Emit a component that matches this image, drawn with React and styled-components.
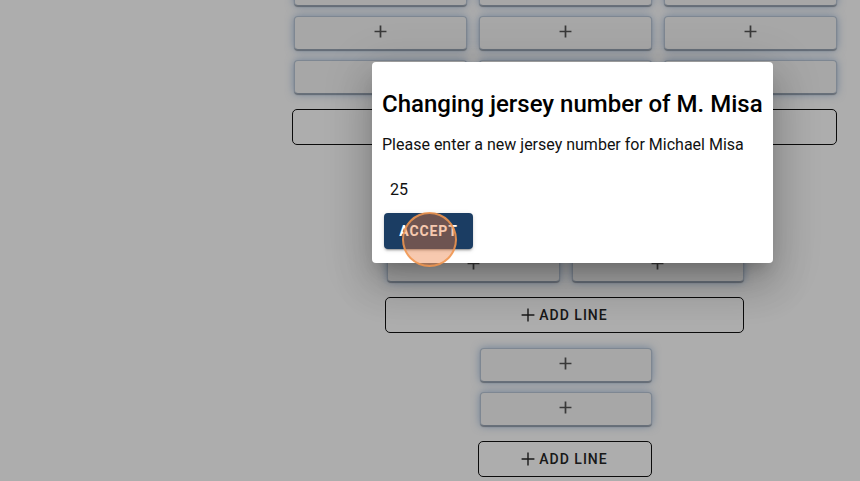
import React from 'react';
import styled, { createGlobalStyle } from 'styled-components';

const Global = createGlobalStyle`
  html, body {
    margin: 0;
    padding: 0;
    background: #fff;
    font-family: Roboto, "Noto Sans", "Liberation Sans", sans-serif;
    overflow: hidden;
  }
  * { box-sizing: border-box; }
`;

const Page = styled.div`
  position: relative;
  width: 860px;
  height: 481px;
  overflow: hidden;
  background: #fff;
`;

const Main = styled.main`
  margin-left: 292px;
  margin-top: -28px;
  width: 545px;
  display: flex;
  flex-direction: column;
  align-items: center;
  gap: 15px;
`;

const Grid = styled.div`
  width: ${(p) => p.$width}px;
  padding-left: 2px;
  display: grid;
  grid-template-columns: repeat(${(p) => p.$cols}, 1fr);
  column-gap: 12px;
  row-gap: 10px;
`;

const Slot = styled.button`
  height: 34px;
  padding: 0 0 3px;
  display: flex;
  align-items: ${(p) => (p.$player ? 'flex-end' : 'center')};
  justify-content: center;
  background: #f7f7f7;
  border: 1px solid #bac7d7;
  border-bottom-color: #9aa6b4;
  border-radius: 4px;
  box-shadow: 0 0 8px rgba(70, 120, 185, 0.5), 0 1px 1px rgba(0, 0, 0, 0.35);
  color: #555;
  font-family: Roboto, sans-serif;
  font-size: 14px;
  font-weight: 500;
  letter-spacing: 1.25px;
  text-transform: uppercase;
  line-height: 16px;
`;

const AddLine = styled.button`
  width: 100%;
  height: 36px;
  display: flex;
  align-items: center;
  justify-content: center;
  gap: 4px;
  background: transparent;
  border: 1px solid #111;
  border-radius: 5px;
  color: #262626;
  font-family: Roboto, sans-serif;
  font-size: 14px;
  font-weight: 500;
  letter-spacing: 1px;
  text-transform: uppercase;
`;

const Overlay = styled.div`
  position: absolute;
  inset: 0;
  background: rgba(0, 0, 0, 0.32);
`;

const Dialog = styled.div`
  position: absolute;
  left: 372px;
  top: 62px;
  width: 401px;
  padding: 28px 10px 14px;
  background: #fff;
  border-radius: 4px;
  box-shadow: 0 11px 15px -7px rgba(0, 0, 0, 0.2), 0 24px 38px 3px rgba(0, 0, 0, 0.14),
    0 9px 46px 8px rgba(0, 0, 0, 0.12);
  display: flex;
  flex-direction: column;
  align-items: flex-start;
`;

const Title = styled.h2`
  margin: 0;
  font-size: 24px;
  line-height: 28px;
  font-weight: 500;
  color: #000;
  white-space: nowrap;
`;

const Body = styled.p`
  margin: 17px 0 0;
  font-size: 16px;
  line-height: 20px;
  color: #111;
`;

const Field = styled.input`
  margin-top: 16px;
  width: 100%;
  height: 36px;
  padding: 8px;
  border: none;
  outline: none;
  font-family: Roboto, sans-serif;
  font-size: 16px;
  line-height: 20px;
  color: #111;
  background: transparent;
`;

const Accept = styled.button`
  margin: 6px 0 0 2px;
  width: 89px;
  height: 36px;
  border: none;
  border-radius: 4px;
  background: #1b3d63;
  color: #fff;
  font-family: Roboto, sans-serif;
  font-size: 14px;
  font-weight: 700;
  letter-spacing: 0.9px;
  text-transform: uppercase;
  box-shadow: 0 3px 1px -2px rgba(0, 0, 0, 0.2), 0 2px 2px rgba(0, 0, 0, 0.14), 0 1px 5px rgba(0, 0, 0, 0.12);
`;

const ClickMark = styled.div`
  position: absolute;
  left: 402px;
  top: 212px;
  width: 55px;
  height: 55px;
  border-radius: 50%;
  background: rgba(234, 121, 56, 0.4);
  border: 2px solid rgba(240, 150, 80, 0.85);
`;

const PlusIcon = ({ size = 13, stroke = 1.6 }) => (
  <svg width={size} height={size} viewBox="0 0 12 12" aria-hidden="true">
    <path d="M6 0.5V11.5M0.5 6H11.5" stroke="currentColor" strokeWidth={stroke} fill="none" />
  </svg>
);

const section1 = [
  ['', 'M. Misa', ''],
  ['+', '+', '+'],
  ['+', '+', '+'],
];
const section2 = [
  ['+', '+'],
  ['+', '+'],
  ['+', '+'],
];
const section3 = [['+'], ['+']];

const Section = ({ rows, width }) => (
  <>
    <Grid $cols={rows[0].length} $width={width}>
      {rows.flat().map((c, i) =>
        c === '+' ? (
          <Slot key={i}>
            <PlusIcon />
          </Slot>
        ) : (
          <Slot key={i} $player>
            {c}
          </Slot>
        )
      )}
    </Grid>
    <AddLine style={{ width }}>
      <PlusIcon size={14} stroke={1.2} />
      Add line
    </AddLine>
  </>
);

export default function App() {
  return (
    <Page>
      <Global />
      <Main>
        <Section rows={section1} width={545} />
        <Section rows={section2} width={359} />
        <Section rows={section3} width={174} />
      </Main>
      <Overlay />
      <Dialog>
        <Title>Changing jersey number of M. Misa</Title>
        <Body>Please enter a new jersey number for Michael Misa</Body>
        <Field defaultValue="25" />
        <Accept>Accept</Accept>
      </Dialog>
      <ClickMark />
    </Page>
  );
}
